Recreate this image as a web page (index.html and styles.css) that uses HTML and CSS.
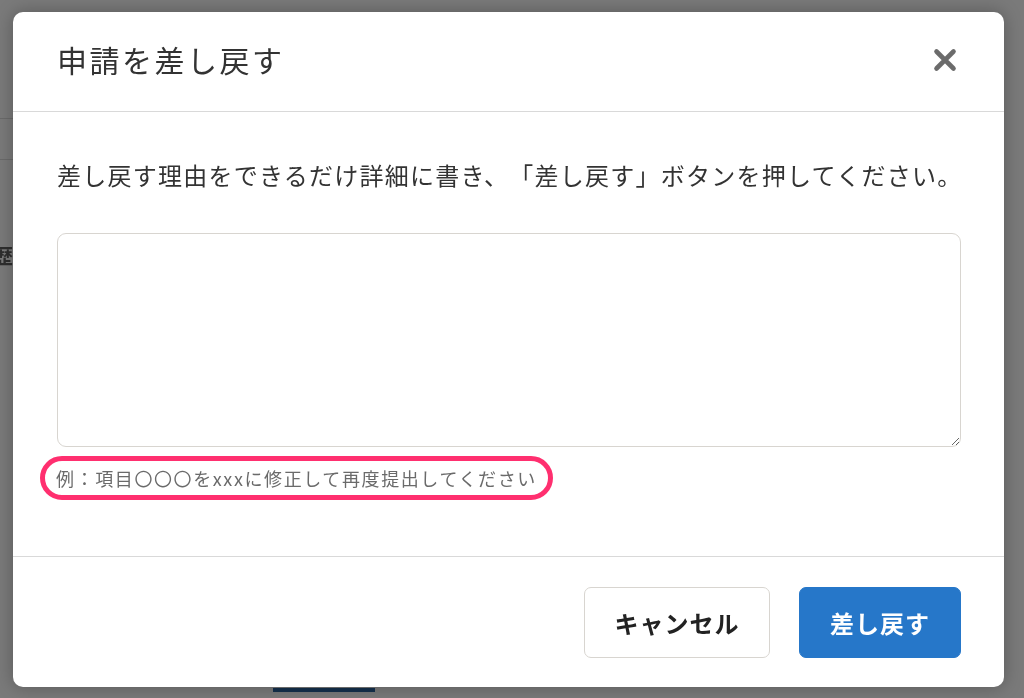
FILE: index.html
```html
<!DOCTYPE html>
<html lang="ja">
<head>
    <meta charset="UTF-8">
    <meta name="viewport" content="width=device-width, initial-scale=1.0">
    <title>申請を差し戻す</title>
    <link rel="stylesheet" href="styles.css">
</head>
<body>

<div class="page">
    <div class="page-line line-a"></div>
    <div class="page-line line-b"></div>
    <div class="page-edge"><span class="page-text">歴</span></div>
    <div class="page-bar"></div>
</div>

<div class="backdrop">
    <div class="modal">
        <header class="modal-header">
            <h1>申請を差し戻す</h1>
            <button class="close" type="button" aria-label="閉じる">
                <svg width="24" height="24" viewBox="0 0 24 24">
                    <path d="M3.5 3.5 L20.5 20.5 M20.5 3.5 L3.5 20.5" stroke="#6b6b6b" stroke-width="4.6" stroke-linecap="round"/>
                </svg>
            </button>
        </header>

        <main class="modal-body">
            <p class="lead">差し戻す理由をできるだけ詳細に書き、「差し戻す」ボタンを押してください。</p>
            <textarea class="reason"></textarea>
            <div class="hint"><span class="hint-mark">例：項目〇〇〇をxxxに修正して再度提出してください</span></div>
        </main>

        <footer class="modal-footer">
            <button class="btn btn-cancel" type="button">キャンセル</button>
            <button class="btn btn-primary" type="button">差し戻す</button>
        </footer>
    </div>
</div>

</body>
</html>
```

FILE: styles.css
```css
:root {
    --text: #333333;
    --muted: #6a6a6a;
    --line: #d9d9d9;
    --field: #d8d5d0;
    --blue: #2677c9;
    --mark: #ff2f6f;
}

* {
    margin: 0;
    padding: 0;
    box-sizing: border-box;
}

body {
    font-family: "Noto Sans CJK JP", "Noto Sans", sans-serif;
    background: #7a7a7a;
    color: var(--text);
    width: 1024px;
    height: 698px;
    overflow: hidden;
    text-spacing-trim: space-all;
}

/* dimmed page behind the dialog */
.page {
    position: fixed;
    inset: 0;
}

.page-line {
    position: absolute;
    left: 0;
    width: 13px;
    height: 1px;
    background: #6a6a6a;
}

.line-a { top: 118px; }
.line-b { top: 159px; }

.page-edge {
    position: absolute;
    left: 0;
    top: 243px;
    width: 13px;
    height: 26px;
    overflow: hidden;
    display: flex;
    justify-content: flex-end;
}

.page-text {
    font-size: 20px;
    line-height: 26px;
    font-weight: 700;
    color: #2e2e2e;
    flex-shrink: 0;
}

.page-bar {
    position: absolute;
    left: 273px;
    top: 688px;
    width: 102px;
    height: 4px;
    background: #15304d;
}

/* dialog */
.backdrop {
    position: fixed;
    inset: 0;
    padding: 12px 0 0 13px;
}

.modal {
    width: 991px;
    background: #fff;
    border-radius: 10px;
    box-shadow: 0 0 18px rgba(0, 0, 0, 0.28);
    overflow: hidden;
}

.modal-header {
    height: 100px;
    display: flex;
    align-items: center;
    justify-content: space-between;
    padding: 0 47px 5px 44px;
    border-bottom: 1px solid var(--line);
}

.modal-header h1 {
    font-size: 30px;
    font-weight: 400;
    letter-spacing: 2.5px;
    color: #333;
}

.close {
    background: none;
    border: none;
    width: 24px;
    height: 24px;
    display: flex;
    cursor: pointer;
    margin-top: 2px;
}

.modal-body {
    height: 445px;
    padding: 45px 43px 0 44px;
    border-bottom: 1px solid var(--line);
}

.lead {
    font-size: 24px;
    line-height: 36px;
    letter-spacing: 1.25px;
    color: #333;
    white-space: nowrap;
}

.reason {
    display: block;
    width: 100%;
    height: 214px;
    margin-top: 40px;
    border: 1px solid var(--field);
    border-radius: 9px;
    font-family: inherit;
    font-size: 18px;
    padding: 10px 14px;
    outline: none;
}

.hint {
    margin: 9px 0 0 -17px;
}

.hint-mark {
    display: inline-block;
    border: 5px solid var(--mark);
    border-radius: 24px;
    padding: 5px 11px;
    font-size: 18px;
    line-height: 24px;
    letter-spacing: 1.6px;
    color: var(--muted);
}

.modal-footer {
    height: 130px;
    display: flex;
    justify-content: flex-end;
    align-items: center;
    gap: 29px;
    padding: 0 43px 0 44px;
}

.btn {
    height: 71px;
    border-radius: 7px;
    font-family: inherit;
    font-size: 24px;
    font-weight: 700;
    letter-spacing: 1px;
    cursor: pointer;
}

.btn-cancel {
    width: 186px;
    background: #fff;
    border: 1px solid var(--field);
    color: #222;
}

.btn-primary {
    width: 162px;
    background: var(--blue);
    border: 1px solid var(--blue);
    color: #fff;
}
```
